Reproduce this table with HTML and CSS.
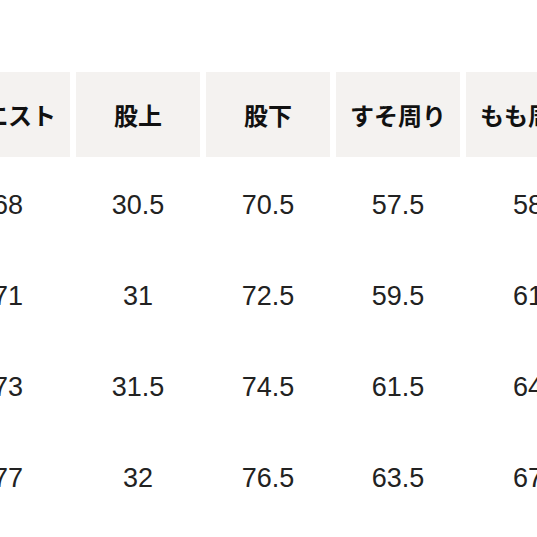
FILE: index.html
```html
<!DOCTYPE html>
<html lang="ja">
<head>
<meta charset="utf-8">
<link rel="stylesheet" href="styles.css">
</head>
<body>
<div class="viewport">
  <div class="size-table">
    <div class="cell head">ウエスト</div>
    <div class="cell head">股上</div>
    <div class="cell head">股下</div>
    <div class="cell head">すそ周り</div>
    <div class="cell head">もも周り</div>

    <div class="cell">68</div><div class="cell">30.5</div><div class="cell">70.5</div><div class="cell">57.5</div><div class="cell">58</div>
    <div class="cell">71</div><div class="cell">31</div><div class="cell">72.5</div><div class="cell">59.5</div><div class="cell">61</div>
    <div class="cell">73</div><div class="cell">31.5</div><div class="cell">74.5</div><div class="cell">61.5</div><div class="cell">64</div>
    <div class="cell">77</div><div class="cell">32</div><div class="cell">76.5</div><div class="cell">63.5</div><div class="cell">67</div>
  </div>
</div>
</body>
</html>
```

FILE: styles.css
```css
html, body {
  margin: 0;
  padding: 0;
  background: #ffffff;
  overflow: hidden;
}

.viewport {
  width: 537px;
  height: 537px;
  overflow: hidden;
  padding-top: 72px;
  box-sizing: border-box;
}

.size-table {
  display: grid;
  grid-template-columns: repeat(5, 124px);
  grid-auto-rows: 85px;
  column-gap: 6px;
  row-gap: 6px;
  margin-left: -54px;
  width: max-content;
}

.cell {
  display: flex;
  align-items: center;
  justify-content: center;
  white-space: nowrap;
  font-family: "Liberation Sans", "Noto Sans CJK JP", sans-serif;
  font-size: 27px;
  font-weight: 400;
  color: #222222;
}

.head {
  background: #f4f2f0;
  font-family: "Noto Sans CJK JP", sans-serif;
  font-size: 24px;
  font-weight: 700;
  color: #111111;
  letter-spacing: 0;
}
```
